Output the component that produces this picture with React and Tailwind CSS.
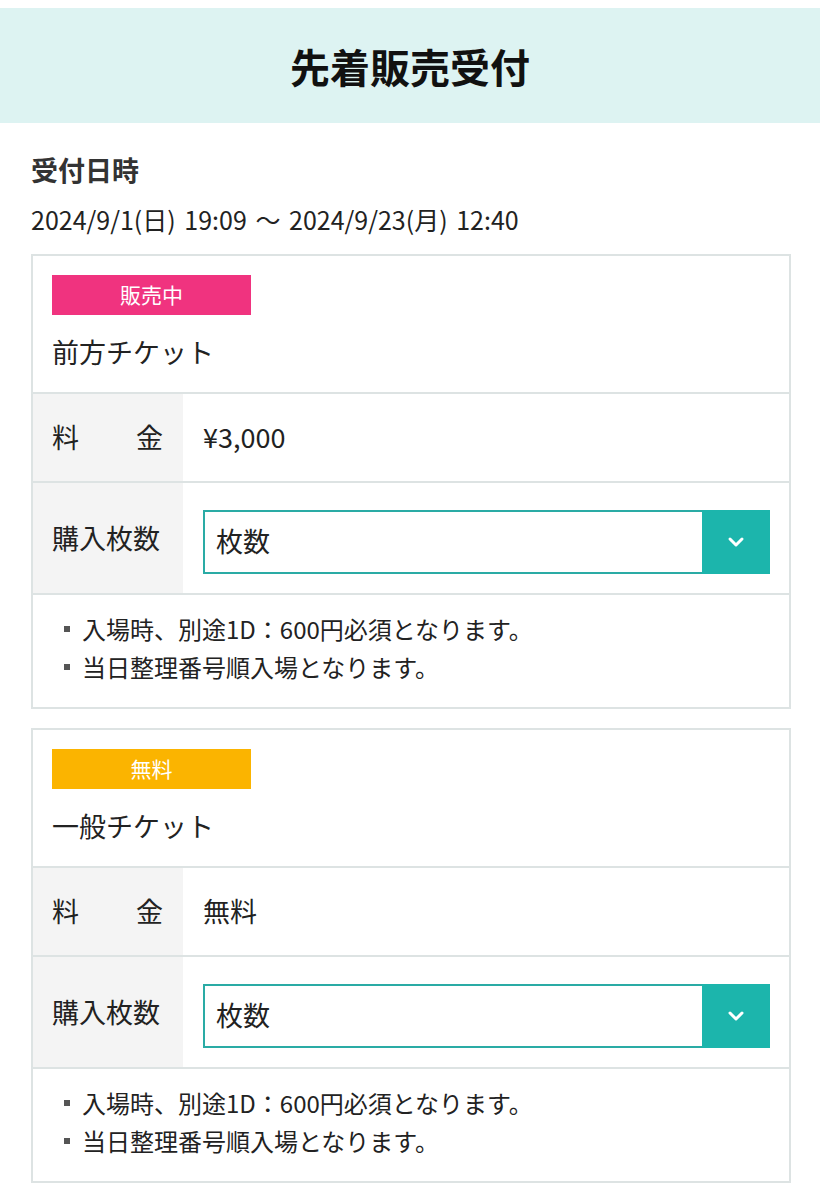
import React from 'react';

const jp = { fontFamily: '"Noto Sans CJK JP", "Noto Sans", sans-serif' };

const Chevron = () => (
    <svg width="18" height="12" viewBox="0 0 18 12" fill="none">
        <path d="M3 3l6 6 6-6" stroke="#ffffff" strokeWidth="3" strokeLinecap="round" strokeLinejoin="round" />
    </svg>
);

const TicketCard = ({ badge, badgeColor, name, price }) => {
    return (
        <div className="border-2 border-[#dde3e3] bg-white">
            <div className="px-[19px] pt-[19px] h-[138px] border-b-2 border-[#dde3e3]">
                <div className={`w-[199px] h-[40px] flex items-center justify-center text-white text-[21px] ${badgeColor}`}>
                    {badge}
                </div>
                <div className="mt-[16px] text-[27px] text-[#222] leading-[42px]">{name}</div>
            </div>
            <div className="flex h-[89px] border-b-2 border-[#dde3e3]">
                <div className="w-[150px] bg-[#f4f4f4] flex items-center pl-[19px]">
                    <div className="w-[111px] flex justify-between text-[27px] text-[#222]">
                        <span>料</span>
                        <span>金</span>
                    </div>
                </div>
                <div className="flex-1 flex items-center pl-[20px] text-[27px] text-[#222]">{price}</div>
            </div>
            <div className="flex h-[112px] border-b-2 border-[#dde3e3]">
                <div className="w-[150px] bg-[#f4f4f4] flex items-center pl-[19px] text-[27px] text-[#222]">
                    購入枚数
                </div>
                <div className="flex-1 flex items-center pl-[20px] pr-[19px] pt-[7px]">
                    <div className="flex-1 h-[64px] flex border-2 border-[#2aaba5] bg-white">
                        <div className="flex-1 flex items-center pl-[11px] text-[27px] text-[#222]">枚数</div>
                        <div className="w-[68px] bg-[#1cb5ac] flex items-center justify-center -my-[2px] -mr-[2px]">
                            <Chevron />
                        </div>
                    </div>
                </div>
            </div>
            <ul className="pl-[31px] pt-[15px] pb-[21px] text-[24px] text-[#222] leading-[38px]">
                <li className="flex items-center">
                    <span className="w-[6px] h-[6px] bg-[#555] mr-[12px]"></span>
                    入場時、別途1D：600円必須となります。
                </li>
                <li className="flex items-center">
                    <span className="w-[6px] h-[6px] bg-[#555] mr-[12px]"></span>
                    当日整理番号順入場となります。
                </li>
            </ul>
        </div>
    );
};

const App = () => {
    return (
        <div className="w-[820px] min-h-[1200px] bg-white pt-[8px]" style={jp}>
            <div className="h-[115px] bg-[#ddf3f2] flex items-center justify-center">
                <h1 className="text-[40px] font-bold text-[#111]">先着販売受付</h1>
            </div>
            <div className="px-[31px]">
                <h2 className="mt-[27px] text-[27px] font-bold text-[#333] leading-[40px]">受付日時</h2>
                <p className="mt-[12px] text-[25px] text-[#222] leading-[34px] [word-spacing:3px]">
                    2024/9/1(日) 19:09 〜 2024/9/23(月) 12:40
                </p>
                <div className="w-[760px] mt-[18px]">
                    <TicketCard badge="販売中" badgeColor="bg-[#f0337f]" name="前方チケット" price="¥3,000" />
                </div>
                <div className="w-[760px] mt-[19px]">
                    <TicketCard badge="無料" badgeColor="bg-[#fbb400]" name="一般チケット" price="無料" />
                </div>
            </div>
        </div>
    );
};

export default App;
